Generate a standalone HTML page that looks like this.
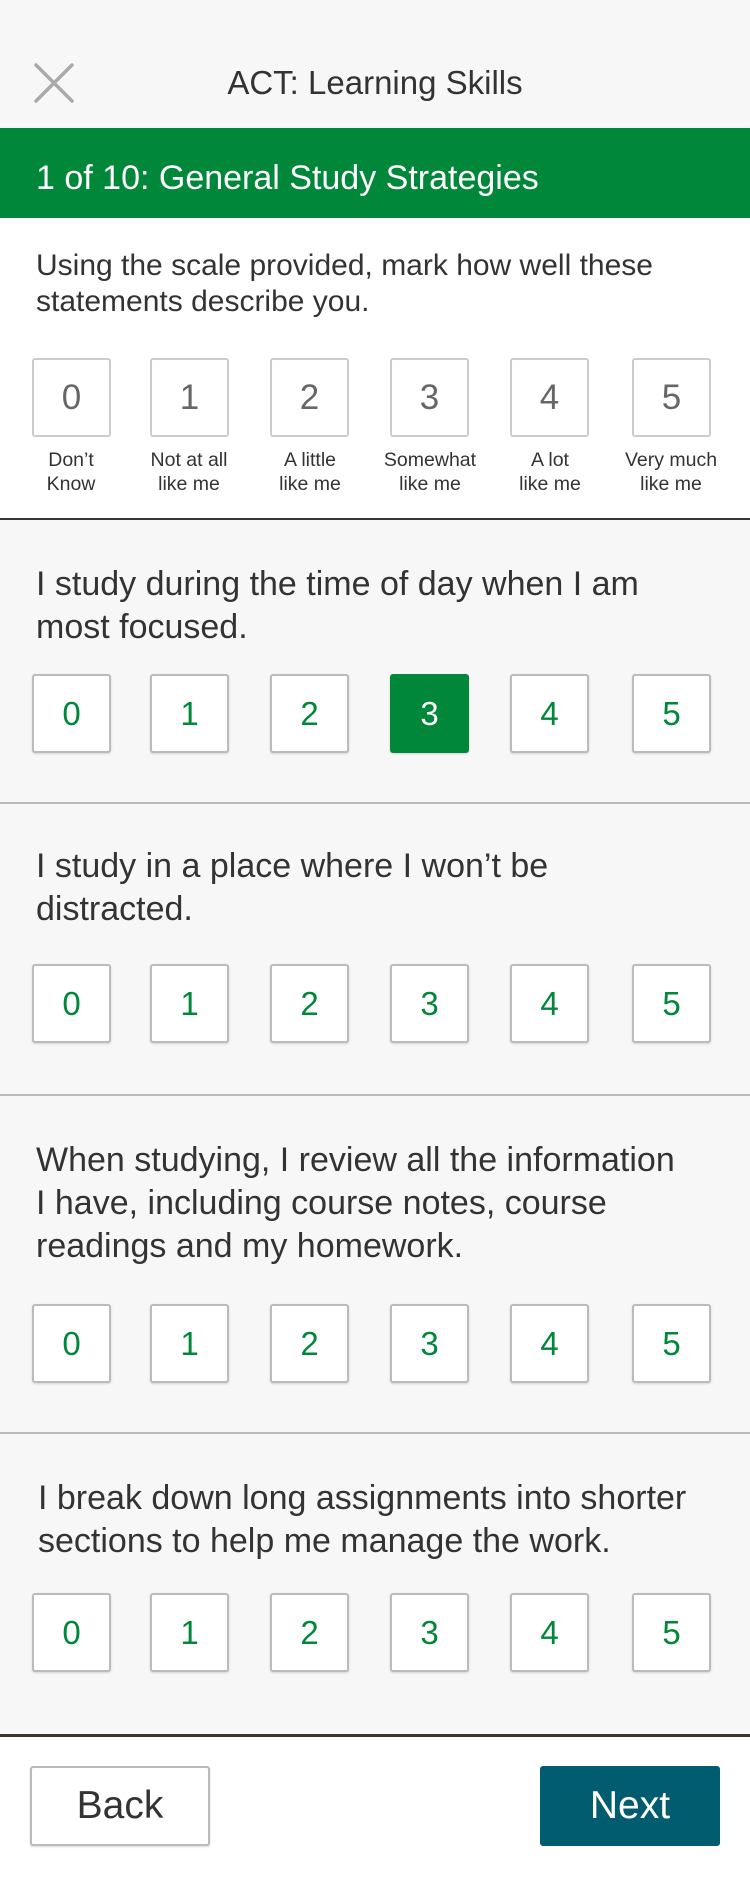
<!DOCTYPE html>
<html><head><meta charset="utf-8"><style>
*{margin:0;padding:0;box-sizing:border-box}
body{width:750px;height:1884px;position:relative;background:#f7f7f7;font-family:"Liberation Sans",sans-serif;color:#333;overflow:hidden}
.a{position:absolute}
.hdr{left:0;top:0;width:750px;height:128px;background:#f7f7f7}
.title{left:0;width:750px;top:64px;text-align:center;font-size:33px;color:#333}
.green{left:0;top:128px;width:750px;height:90px;background:#00873a;color:#fff;font-size:34px;padding:31px 0 0 36px;box-shadow:0 2px 3px rgba(0,0,0,.25)}
.intro{left:0;top:218px;width:750px;height:301px;background:#fff}
.itext{left:36px;top:248px;font-size:30px;line-height:36px;color:#333}
.box{width:79px;height:79px;border:2px solid #bbb;border-radius:3px;background:#fff;text-align:center;font-size:33px;color:#00873a;box-shadow:0 1px 2px rgba(0,0,0,.15)}
.box span{display:block;line-height:75px}
.gbox{border:2px solid #ccc;color:#666;box-shadow:none;font-size:35px}
.sel{background:#00873a;border-color:#00873a;color:#fff}
.lbl{width:130px;text-align:center;font-size:19.5px;line-height:24px;color:#333}
.div{left:0;width:750px;height:2px;background:#bbb}
.dk{background:#3a3431}
.q{left:36px;font-size:34px;line-height:43px;color:#333}
.foot{left:0;top:1736px;width:750px;height:148px;background:#fff}
.btn{width:180px;height:80px;border-radius:3px;text-align:center;font-size:39px;line-height:80px}
</style></head><body>
<div class="a hdr"></div>
<svg class="a" style="left:34px;top:63px" width="40" height="40" viewBox="0 0 40 40"><path d="M2 2L38 38M38 2L2 38" stroke="#aaa" stroke-width="3.5" stroke-linecap="round"/></svg>
<div class="a title">ACT: Learning Skills</div>
<div class="a green">1 of 10: General Study Strategies</div>
<div class="a intro"></div>
<div class="a itext">Using the scale provided, mark how well these<br>statements describe you.</div>

<div class="a box gbox" style="left:32px;top:358px"><span>0</span></div>
<div class="a box gbox" style="left:150px;top:358px"><span>1</span></div>
<div class="a box gbox" style="left:270px;top:358px"><span>2</span></div>
<div class="a box gbox" style="left:390px;top:358px"><span>3</span></div>
<div class="a box gbox" style="left:510px;top:358px"><span>4</span></div>
<div class="a box gbox" style="left:632px;top:358px"><span>5</span></div>
<div class="a lbl" style="left:6px;top:448px">Don’t<br>Know</div>
<div class="a lbl" style="left:124px;top:448px">Not at all<br>like me</div>
<div class="a lbl" style="left:245px;top:448px">A little<br>like me</div>
<div class="a lbl" style="left:365px;top:448px">Somewhat<br>like me</div>
<div class="a lbl" style="left:485px;top:448px">A lot<br>like me</div>
<div class="a lbl" style="left:606px;top:448px">Very much<br>like me</div>
<div class="a div dk" style="top:518px"></div>

<div class="a q" style="top:563px">I study during the time of day when I am<br>most focused.</div>
<div class="a box" style="left:32px;top:674px"><span>0</span></div>
<div class="a box" style="left:150px;top:674px"><span>1</span></div>
<div class="a box" style="left:270px;top:674px"><span>2</span></div>
<div class="a box sel" style="left:390px;top:674px"><span>3</span></div>
<div class="a box" style="left:510px;top:674px"><span>4</span></div>
<div class="a box" style="left:632px;top:674px"><span>5</span></div>
<div class="a div" style="top:802px"></div>

<div class="a q" style="top:845px">I study in a place where I won’t be<br>distracted.</div>
<div class="a box" style="left:32px;top:964px"><span>0</span></div>
<div class="a box" style="left:150px;top:964px"><span>1</span></div>
<div class="a box" style="left:270px;top:964px"><span>2</span></div>
<div class="a box" style="left:390px;top:964px"><span>3</span></div>
<div class="a box" style="left:510px;top:964px"><span>4</span></div>
<div class="a box" style="left:632px;top:964px"><span>5</span></div>
<div class="a div" style="top:1094px"></div>

<div class="a q" style="top:1139px">When studying, I review all the information<br>I have, including course notes, course<br>readings and my homework.</div>
<div class="a box" style="left:32px;top:1304px"><span>0</span></div>
<div class="a box" style="left:150px;top:1304px"><span>1</span></div>
<div class="a box" style="left:270px;top:1304px"><span>2</span></div>
<div class="a box" style="left:390px;top:1304px"><span>3</span></div>
<div class="a box" style="left:510px;top:1304px"><span>4</span></div>
<div class="a box" style="left:632px;top:1304px"><span>5</span></div>
<div class="a div" style="top:1432px"></div>

<div class="a q" style="left:38px;top:1477px">I break down long assignments into shorter<br>sections to help me manage the work.</div>
<div class="a box" style="left:32px;top:1593px"><span>0</span></div>
<div class="a box" style="left:150px;top:1593px"><span>1</span></div>
<div class="a box" style="left:270px;top:1593px"><span>2</span></div>
<div class="a box" style="left:390px;top:1593px"><span>3</span></div>
<div class="a box" style="left:510px;top:1593px"><span>4</span></div>
<div class="a box" style="left:632px;top:1593px"><span>5</span></div>

<div class="a foot"></div>
<div class="a div dk" style="top:1734px;height:3px"></div>
<div class="a btn" style="left:30px;top:1766px;border:2px solid #bbb;background:#fff;color:#333;box-shadow:0 1px 2px rgba(0,0,0,.15);line-height:76px">Back</div>
<div class="a btn" style="left:540px;top:1766px;background:#005c6e;color:#fff">Next</div>
</body></html>
